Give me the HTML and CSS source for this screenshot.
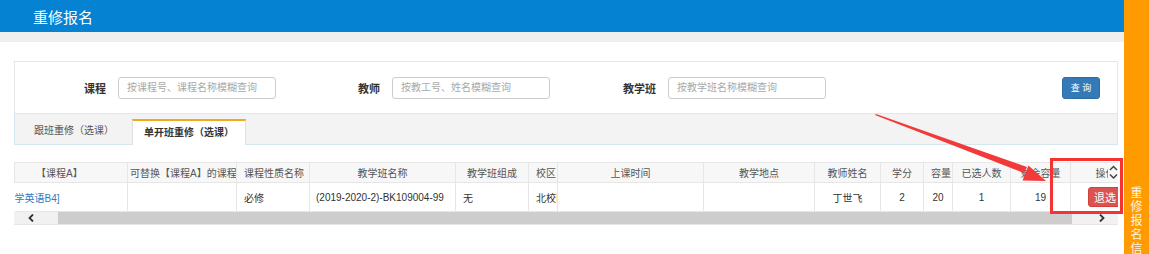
FILE: index.html
```html
<!DOCTYPE html>
<html lang="zh-CN">
<head>
  <meta charset="UTF-8" />
  <meta name="viewport" content="width=device-width, initial-scale=1.0"/>
  <title>重修报名</title>
  <link rel="stylesheet" href="styles.css">
</head>
<body>
  <div class="page">
    <div class="main">
      <div class="topbar"><h1 class="title">重修报名</h1></div>
      <div class="band"></div>

      <div class="content">
        <div class="search-panel">
          <div class="field">
            <label class="field-label">课程</label>
            <input class="field-input" type="text" placeholder="按课程号、课程名称模糊查询" />
          </div>
          <div class="field field-2">
            <label class="field-label">教师</label>
            <input class="field-input" type="text" placeholder="按教工号、姓名模糊查询" />
          </div>
          <div class="field field-3">
            <label class="field-label">教学班</label>
            <input class="field-input" type="text" placeholder="按教学班名称模糊查询" />
          </div>
          <button class="btn-search">查 询</button>
        </div>

        <div class="tabs">
          <div class="tab">跟班重修（选课）</div>
          <div class="tab active">单开班重修（选课）</div>
        </div>

        <div class="grid-wrap">
          <div class="grid-clip">
            <table class="grid">
              <colgroup>
                <col style="width:113px"><col style="width:109px"><col style="width:73px">
                <col style="width:146px"><col style="width:73px"><col style="width:29px">
                <col style="width:146px"><col style="width:111px"><col style="width:66px">
                <col style="width:43px"><col style="width:29px"><col style="width:58px">
                <col style="width:60px"><col style="width:70px">
              </colgroup>
              <thead>
                <tr>
                  <th class="th-first">【课程A】</th>
                  <th class="left tight">可替换【课程A】的课程</th>
                  <th>课程性质名称</th>
                  <th>教学班名称</th>
                  <th>教学班组成</th>
                  <th>校区</th>
                  <th>上课时间</th>
                  <th>教学地点</th>
                  <th>教师姓名</th>
                  <th>学分</th>
                  <th>容量</th>
                  <th>已选人数</th>
                  <th>剩余容量</th>
                  <th>操作</th>
                </tr>
              </thead>
              <tbody>
                <tr>
                  <td class="td-first"><a class="link" href="#">学英语B4]</a></td>
                  <td></td>
                  <td>必修</td>
                  <td class="pad6">(2019-2020-2)-BK109004-99</td>
                  <td>无</td>
                  <td>北校区</td>
                  <td></td>
                  <td></td>
                  <td class="center">丁世飞</td>
                  <td class="center">2</td>
                  <td class="center">20</td>
                  <td class="center">1</td>
                  <td class="center">19</td>
                  <td class="td-action"><button class="btn-drop">退选</button></td>
                </tr>
              </tbody>
            </table>
            <div class="vscroll">
              <svg width="9" height="16" viewBox="0 0 9 16">
                <path d="M1 6 L4.5 2.5 L8 6" fill="none" stroke="#444" stroke-width="1.5"/>
                <path d="M1 10.5 L4.5 14 L8 10.5" fill="none" stroke="#444" stroke-width="1.5"/>
              </svg>
            </div>
          </div>
          <div class="hscroll">
            <div class="hs-btn hs-left">
              <svg width="6" height="8" viewBox="0 0 6 8"><path d="M5 0.5 L1.5 4 L5 7.5" fill="none" stroke="#333" stroke-width="1.8"/></svg>
            </div>
            <div class="hs-thumb"></div>
            <div class="hs-btn hs-right">
              <svg width="6" height="8" viewBox="0 0 6 8"><path d="M1 0.5 L4.5 4 L1 7.5" fill="none" stroke="#333" stroke-width="1.8"/></svg>
            </div>
          </div>
        </div>
      </div>

      <div class="footer-line"></div>
    </div>

    <div class="sidebar">
      <svg class="side-arrow" width="12" height="10" viewBox="0 0 12 10">
        <path d="M0.5 5 L5.5 0.5 L5.5 3.3 L11.5 3.3 L11.5 6.7 L5.5 6.7 L5.5 9.5 Z" fill="#fff"/>
      </svg>
      <div class="side-text">重修报名信</div>
    </div>

    <!-- annotation drawn over the screenshot -->
    <svg class="annot" width="1149" height="254" viewBox="0 0 1149 254">
      <polygon points="875,115 876,114 1027,167 1024,173" fill="#f23a3a"/>
      <polygon points="1046,181 1022.6,180.6 1028.4,165.6" fill="#f23a3a"/>
      <rect x="1051.5" y="159.5" width="70" height="53" fill="none" stroke="#f53333" stroke-width="3"/>
    </svg>
  </div>
</body>
</html>
```

FILE: styles.css
```css
* {
  box-sizing: border-box;
}
body {
  margin: 0;
  font-family: "Liberation Sans", "Noto Sans CJK SC", sans-serif;
  color: #333;
  background: #fff;
}
.page {
  position: relative;
  display: flex;
  width: 1149px;
  height: 254px;
  overflow: hidden;
}
.main {
  flex: 1;
  min-width: 0;
}
.topbar {
  height: 32px;
  background: #0582d2;
  display: flex;
  align-items: center;
  padding-left: 33px;
}
.title {
  margin: 0;
  font-size: 15px;
  font-weight: normal;
  color: #fff;
}
.band {
  height: 10px;
  background: #efefef;
}
.content {
  padding: 19px 6px 0 14px;
}

/* search panel */
.search-panel {
  height: 53px;
  border: 1px solid #e6e6e6;
  display: flex;
  align-items: center;
  padding-left: 1px;
}
.field {
  display: flex;
  align-items: center;
}
.field-2 {
  margin-left: 14px;
}
.field-3 {
  margin-left: 16px;
}
.field-label {
  width: 90px;
  text-align: right;
  font-size: 11px;
  font-weight: bold;
  color: #333;
  margin-right: 12px;
}
.field-input {
  width: 158px;
  height: 22px;
  border: 1px solid #cccccc;
  border-radius: 3px;
  padding: 0 8px;
  font-size: 10px;
  font-family: inherit;
}
.field-input::placeholder {
  color: #a9a9a9;
}
.btn-search {
  margin-left: auto;
  margin-right: 17px;
  width: 38px;
  height: 22px;
  background: #337ab7;
  border: 1px solid #2e6da4;
  border-radius: 3px;
  color: #fff;
  font-size: 9px;
  font-family: inherit;
  padding: 0;
}

/* tabs */
.tabs {
  height: 31px;
  background: #f3f3f3;
  border: 1px solid #d5e7ee;
  border-top: none;
  display: flex;
  align-items: flex-end;
  gap: 5px;
  padding-left: 6px;
}
.tab {
  height: 25px;
  line-height: 24px;
  padding: 0 13px;
  font-size: 10px;
  color: #555;
}
.tab.active {
  background: #fff;
  border: 1px solid #e0e0e0;
  border-top: 2px solid #f2a91e;
  border-bottom: none;
  margin-bottom: -1px;
  height: 26px;
  line-height: 23px;
  padding: 0 11px;
  color: #333;
  font-weight: bold;
}

/* table */
.grid-wrap {
  margin-top: 17px;
  border-bottom: 1px solid #e6e6e6;
}
.grid-clip {
  position: relative;
  overflow: hidden;
}
.grid {
  table-layout: fixed;
  border-collapse: collapse;
  width: 1126px;
  font-size: 10px;
}
.grid th,
.grid td {
  border: 1px solid #e6e6e6;
  white-space: nowrap;
  overflow: hidden;
  padding: 0 7px;
}
.grid th {
  height: 20px;
  font-weight: normal;
  color: #555;
  background: #f7f7f7;
  text-align: center;
}
.grid th.left {
  text-align: left;
}
.grid th.tight {
  padding-left: 2px;
  padding-right: 0;
}
.grid th.th-first {
  text-align: left;
  padding-left: 21px;
}
.grid td {
  height: 29px;
  color: #333;
  text-align: left;
}
.grid td.td-first {
  padding: 0;
  border-left: none;
}
.grid td.pad6 {
  padding-left: 6px;
}
.grid td.center {
  text-align: center;
}
.grid td.td-action {
  padding-left: 17px;
}
.link {
  color: #2f7ac0;
  text-decoration: none;
}
.btn-drop {
  background: #d9534f;
  border: 1px solid #d43f3a;
  border-radius: 3px;
  color: #fff;
  font-size: 11px;
  font-family: inherit;
  height: 20px;
  padding: 0 10px 0 5px;
}
.vscroll {
  position: absolute;
  top: 1px;
  right: 0;
  width: 10px;
  height: 18px;
  background: #f7f7f7;
  display: flex;
  align-items: center;
  justify-content: center;
}
.hscroll {
  display: flex;
  height: 12px;
}
.hs-btn {
  background: #f1f1f1;
  display: flex;
  align-items: center;
}
.hs-left {
  width: 44px;
  padding-left: 14px;
}
.hs-right {
  width: 46px;
  justify-content: flex-end;
  padding-right: 13px;
}
.hs-thumb {
  flex: 1;
  background: #cdcdcd;
}

.footer-line {
  margin-top: 29px;
  height: 3px;
  border-top: 1px solid #d3e9d3;
  background: #f4faf4;
}

/* right sidebar */
.sidebar {
  width: 25px;
  background: #ff9b00;
  display: flex;
  flex-direction: column;
  align-items: center;
}
.side-arrow {
  margin-top: 15px;
}
.side-text {
  margin-top: 171px;
  width: 12px;
  font-size: 12px;
  line-height: 14px;
  color: #fff3e0;
  word-break: break-all;
}

.annot {
  position: absolute;
  top: 0;
  left: 0;
  pointer-events: none;
}
```
